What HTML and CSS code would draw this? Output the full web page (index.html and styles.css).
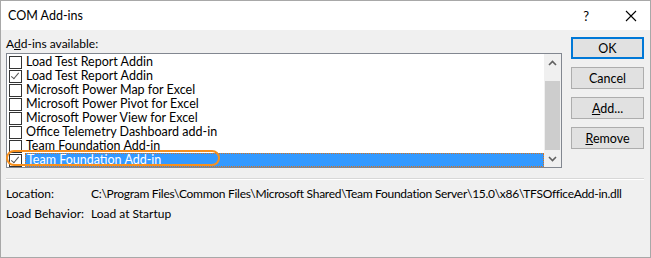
FILE: index.html
```html
<!DOCTYPE html>
<html lang="en">
<head>
    <meta charset="UTF-8">
    <title>COM Add-ins</title>
    <link rel="stylesheet" href="styles.css">
</head>
<body>
    <div class="dialog">
        <!-- Title bar -->
        <div class="titlebar">
            <span class="title">COM Add-ins</span>
            <div class="title-buttons">
                <span class="help">?</span>
                <svg class="close" width="12" height="12" viewBox="0 0 12 12">
                    <path d="M1 1 L11 11 M11 1 L1 11" stroke="#000" stroke-width="1.1" fill="none"/>
                </svg>
            </div>
        </div>

        <div class="dialog-body">
            <div class="top">
                <div class="list-area">
                    <div class="list-label">A<u>d</u>d-ins available:</div>
                    <div class="listbox">
                        <div class="items">
                            <div class="item"><span class="check"></span><span class="name">Load Test Report Addin</span></div>
                            <div class="item"><span class="check checked"></span><span class="name">Load Test Report Addin</span></div>
                            <div class="item"><span class="check"></span><span class="name">Microsoft Power Map for Excel</span></div>
                            <div class="item"><span class="check"></span><span class="name">Microsoft Power Pivot for Excel</span></div>
                            <div class="item"><span class="check"></span><span class="name">Microsoft Power View for Excel</span></div>
                            <div class="item"><span class="check"></span><span class="name">Office Telemetry Dashboard add-in</span></div>
                            <div class="item"><span class="check"></span><span class="name">Team Foundation Add-in</span></div>
                            <div class="item selected"><span class="check checked"></span><span class="name">Team Foundation Add-in</span></div>
                        </div>
                        <div class="scrollbar">
                            <div class="arrow">
                                <svg width="9" height="6" viewBox="0 0 9 6"><path d="M1 5 L4.5 1.5 L8 5" stroke="#606060" stroke-width="1.6" fill="none"/></svg>
                            </div>
                            <div class="track"><div class="thumb"></div></div>
                            <div class="arrow">
                                <svg width="9" height="6" viewBox="0 0 9 6"><path d="M1 1 L4.5 4.5 L8 1" stroke="#606060" stroke-width="1.6" fill="none"/></svg>
                            </div>
                        </div>
                    </div>
                    <!-- highlight drawn over the selected add-in -->
                    <div class="callout"></div>
                </div>

                <div class="buttons">
                    <button class="btn default">OK</button>
                    <button class="btn">Cancel</button>
                    <button class="btn"><u>A</u>dd...</button>
                    <button class="btn"><u>R</u>emove</button>
                </div>
            </div>

            <div class="separator"></div>

            <div class="details">
                <span>Location:</span>
                <span class="path">C:\Program Files\Common Files\Microsoft Shared\Team Foundation Server\15.0\x86\TFSOfficeAdd-in.dll</span>
                <span>Load Behavior:</span>
                <span>Load at Startup</span>
            </div>
        </div>
    </div>
</body>
</html>
```

FILE: styles.css
```css
body {
    margin: 0;
    font-family: Lato, "Noto Sans", sans-serif;
    font-size: 12px;
    color: #000;
    background-color: #fff;
}

.dialog {
    width: 651px;
    height: 258px;
    box-sizing: border-box;
    border: 1px solid #a8a8a8;
    background-color: #f0f0f0;
    display: flex;
    flex-direction: column;
}

.titlebar {
    height: 29px;
    background-color: #fff;
    display: flex;
    align-items: center;
    justify-content: space-between;
    padding: 0 13px 0 7px;
}

.title {
    font-size: 12.5px;
}

.title-buttons {
    display: flex;
    align-items: center;
    gap: 36px;
}

.help {
    font-size: 13px;
}

.dialog-body {
    padding: 7px 6px 0 5px;
}

.top {
    display: flex;
    gap: 9px;
}

.list-area {
    position: relative;
    width: 557px;
}

.list-label {
    height: 16px;
    line-height: 14px;
}

.listbox {
    display: flex;
    height: 113px;
    border: 1px solid #828790;
    background-color: #fff;
}

.items {
    flex: 1;
    padding-top: 1px;
    font-size: 12.5px;
}

.item {
    display: flex;
    align-items: center;
    height: 14px;
    padding-left: 2px;
}

.check {
    width: 11px;
    height: 11px;
    border: 1px solid #333;
    background-color: #fff;
    margin-right: 3px;
    position: relative;
}

.check.checked::after {
    content: "";
    position: absolute;
    left: 3px;
    top: 0;
    width: 3px;
    height: 7px;
    border-right: 1.3px solid #555;
    border-bottom: 1.3px solid #555;
    transform: rotate(40deg);
}

.name {
    flex: 1;
    height: 14px;
    line-height: 14px;
    padding-left: 1px;
    white-space: nowrap;
}

.item.selected .name {
    background-color: #3399ff;
    color: #fff;
    box-sizing: border-box;
    border: 1px dotted #d9731c;
    line-height: 12px;
}

.scrollbar {
    width: 17px;
    background-color: #f0f0f0;
    display: flex;
    flex-direction: column;
}

.arrow {
    height: 17px;
    display: flex;
    align-items: center;
    justify-content: center;
}

.track {
    flex: 1;
    padding-top: 10px;
}

.thumb {
    height: 69px;
    margin: 0 1px;
    background-color: #cdcdcd;
}

.callout {
    position: absolute;
    left: 0;
    top: 113px;
    width: 210px;
    height: 12px;
    border: 2.5px solid #f7901e;
    border-radius: 9px;
}

.buttons {
    display: flex;
    flex-direction: column;
    gap: 8px;
}

.btn {
    width: 73px;
    height: 22px;
    font-family: Lato, "Noto Sans", sans-serif;
    font-size: 12.5px;
    background-color: #e1e1e1;
    border: 1px solid #adadad;
    padding: 0;
    color: #000;
}

.btn.default {
    border: 2px solid #0078d7;
}

.separator {
    margin-top: 10px;
    height: 1px;
    background-color: #d8d8d8;
    border-bottom: 1px solid #fff;
}

.details {
    display: grid;
    grid-template-columns: 85px auto;
    grid-auto-rows: 20px;
    align-items: center;
    padding-top: 3px;
    white-space: nowrap;
}

.path {
    letter-spacing: -0.28px;
}
```
